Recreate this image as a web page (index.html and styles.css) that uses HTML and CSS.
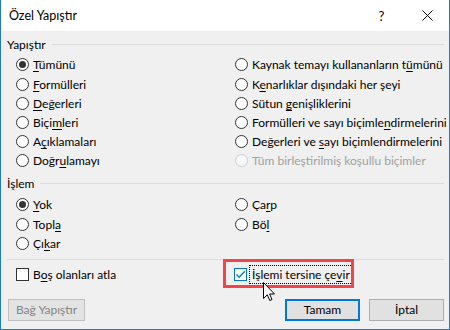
FILE: index.html
```html
<!DOCTYPE html>
<html lang="tr">
<head>
<meta charset="utf-8">
<title>Özel Yapıştır</title>
<link rel="stylesheet" href="styles.css">
</head>
<body>
<div class="window">
  <div class="titlebar">
    <span class="title">Özel Yapıştır</span>
    <span class="help">?</span>
    <svg class="close" width="11" height="11" viewBox="0 0 11 11"><path d="M0.5 0.5 L10.5 10.5 M10.5 0.5 L0.5 10.5" stroke="#000" stroke-width="1" fill="none"/></svg>
  </div>
  <div class="content">
    <div class="group-head">Yapıştır</div>
    <div class="options paste">
      <div class="opt"><span class="radio on"></span><span><u>T</u>ümünü</span></div>
      <div class="opt"><span class="radio"></span><span><u>F</u>ormülleri</span></div>
      <div class="opt"><span class="radio"></span><span><u>D</u>eğerleri</span></div>
      <div class="opt"><span class="radio"></span><span>Biçi<u>m</u>leri</span></div>
      <div class="opt"><span class="radio"></span><span>A<u>ç</u>ıklamaları</span></div>
      <div class="opt"><span class="radio"></span><span>Doğr<u>u</u>lamayı</span></div>
      <div class="opt"><span class="radio"></span><span>Kaynak temayı kullananların t<u>ü</u>münü</span></div>
      <div class="opt"><span class="radio"></span><span>K<u>e</u>narlıklar dışındaki her şeyi</span></div>
      <div class="opt"><span class="radio"></span><span>Sütun <u>g</u>enişliklerini</span></div>
      <div class="opt"><span class="radio"></span><span>Formülleri ve sayı biçimle<u>n</u>dirmelerini</span></div>
      <div class="opt"><span class="radio"></span><span>Değerleri ve <u>s</u>ayı biçimlendirmelerini</span></div>
      <div class="opt disabled"><span class="radio"></span><span>Tüm birleştirilmiş koşullu biçimler</span></div>
    </div>
    <div class="group-head">İşlem</div>
    <div class="options op">
      <div class="opt"><span class="radio on"></span><span><u>Y</u>ok</span></div>
      <div class="opt"><span class="radio"></span><span>Topl<u>a</u></span></div>
      <div class="opt"><span class="radio"></span><span>Çı<u>k</u>ar</span></div>
      <div class="opt"><span class="radio"></span><span>Ça<u>r</u>p</span></div>
      <div class="opt"><span class="radio"></span><span>Bö<u>l</u></span></div>
    </div>
    <div class="sep"></div>
    <div class="checks">
      <div class="opt"><span class="box"></span><span>B<u>o</u>ş olanları atla</span></div>
      <div class="opt highlight">
        <span class="box checked"><svg width="11" height="11" viewBox="0 0 11 11"><path d="M1.5 5.5 L4.2 8.2 L9.8 2.2" stroke="#0078d7" stroke-width="1.4" fill="none"/></svg></span>
        <span class="focus">İşlemi tersine çe<u>v</u>ir</span>
      </div>
    </div>
    <div class="buttons">
      <span class="btn disabled">Bağ Yapıştır</span>
      <span class="btn default">Tamam</span>
      <span class="btn">İptal</span>
    </div>
  </div>
  <svg class="cursor" width="13" height="20" viewBox="0 0 13 20"><path d="M0.5 0.5 L0.5 16.5 L4.3 12.8 L6.8 18.5 L9 17.5 L6.6 12 L11.5 12 Z" fill="#fff" stroke="#000" stroke-width="1" stroke-linejoin="miter"/></svg>
</div>
</body>
</html>
```
FILE: styles.css
```css
html, body {
  margin: 0;
  padding: 0;
  background: #f0f0f0;
}

body {
  font-family: Lato, "Noto Sans", sans-serif;
  font-size: 12px;
  color: #000;
}

.window {
  position: relative;
  width: 450px;
  height: 330px;
  box-sizing: border-box;
  border: 1px solid #1d7ad2;
  border-top: 0;
  background: #f0f0f0;
  display: flex;
  flex-direction: column;
}

.titlebar {
  height: 31px;
  flex: none;
  background: #fff;
  display: flex;
  align-items: center;
}

.title {
  padding-left: 8px;
  font-size: 12.5px;
}

.help {
  margin-left: auto;
  width: 11px;
  text-align: center;
  font-size: 13px;
  margin-right: 35px;
}

.close {
  margin-right: 16px;
  display: block;
}

.content {
  padding: 0 5px 0 6px;
  display: flex;
  flex-direction: column;
}

.group-head {
  margin-top: 6px;
  height: 14px;
  display: flex;
  align-items: center;
  gap: 6px;
  white-space: nowrap;
}

.group-head::after {
  content: "";
  flex: 1;
  height: 1px;
  background: #dcdcdc;
}

.options {
  display: grid;
  grid-template-columns: 219px 1fr;
  grid-auto-flow: column;
  padding-left: 9px;
}

.paste {
  grid-template-rows: repeat(6, 19.2px);
  padding-top: 4.4px;
}

.op {
  grid-template-rows: repeat(3, 19.2px);
  padding-top: 4.8px;
}

.opt {
  display: flex;
  align-items: center;
  gap: 4px;
  white-space: nowrap;
}

u {
  text-decoration: underline;
  text-underline-offset: 2px;
  text-decoration-thickness: 1px;
}

.radio {
  width: 13px;
  height: 13px;
  box-sizing: border-box;
  border: 1px solid #333;
  border-radius: 50%;
  background: #fff;
  flex: none;
  display: grid;
  place-items: center;
}

.radio.on::after {
  content: "";
  width: 7px;
  height: 7px;
  border-radius: 50%;
  background: #333;
}

.disabled .radio {
  border-color: #cccccc;
  background: #f7f7f7;
}

.opt.disabled {
  color: #a0a0a0;
}

.sep {
  margin-top: 6px;
  height: 1px;
  background: #dcdcdc;
}

.checks {
  height: 30px;
  display: grid;
  grid-template-columns: 219px 1fr;
  align-items: center;
  padding-left: 9px;
}

.box {
  width: 13px;
  height: 13px;
  box-sizing: border-box;
  border: 1px solid #333;
  background: #fff;
  flex: none;
  display: grid;
  place-items: center;
}

.box.checked {
  border-color: #0078d7;
}

.box svg {
  display: block;
}

.highlight {
  position: relative;
  margin-left: -1px;
  gap: 2px;
}

.highlight::before {
  content: "";
  position: absolute;
  left: -11px;
  top: -6px;
  width: 131px;
  height: 29px;
  box-sizing: border-box;
  border: 3px solid #f0464b;
}

.focus {
  border: 1px dotted #000;
  padding: 0 2px;
  line-height: 17px;
}

.buttons {
  margin-top: 9px;
  display: flex;
  gap: 9px;
}

.btn {
  height: 22px;
  width: 75px;
  box-sizing: border-box;
  border: 1px solid #adadad;
  background: #e1e1e1;
  display: flex;
  align-items: center;
  justify-content: center;
  white-space: nowrap;
}

.btn.disabled {
  width: 77px;
  margin-left: 1px;
  margin-right: auto;
  border-color: #bfbfbf;
  background: #e3e3e3;
  color: #838383;
}

.btn.default {
  border: 2px solid #0078d7;
}

.cursor {
  position: absolute;
  left: 262px;
  top: 282px;
}
```
